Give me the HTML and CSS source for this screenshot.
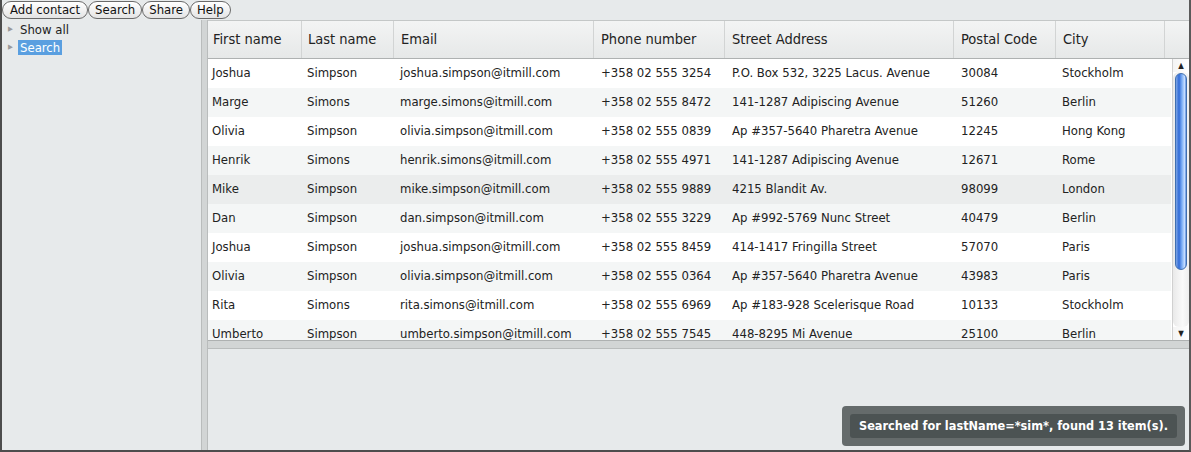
FILE: index.html
```html
<!DOCTYPE html>
<html>
<head>
<meta charset="utf-8">
<link rel="stylesheet" href="styles.css">
</head>
<body>
<div class="app">
  <div class="toolbar">
    <button class="btn">Add contact</button><button class="btn">Search</button><button class="btn">Share</button><button class="btn">Help</button>
  </div>
  <div class="main">
    <div class="tree">
      <div class="node"><span class="arrow">&#9654;</span><span class="label">Show all</span></div>
      <div class="node"><span class="arrow">&#9654;</span><span class="label sel">Search</span></div>
    </div>
    <div class="vsplit"></div>
    <div class="right">
      <div class="table">
        <div class="thead">
          <div class="th c1">First name</div>
          <div class="th c2">Last name</div>
          <div class="th c3">Email</div>
          <div class="th c4">Phone number</div>
          <div class="th c5">Street Address</div>
          <div class="th c6">Postal Code</div>
          <div class="th c7">City</div>
          <div class="th c8"></div>
        </div>
        <div class="tbody">
          <div class="rows">
            <div class="row"><div class="td c1">Joshua</div><div class="td c2">Simpson</div><div class="td c3">joshua.simpson@itmill.com</div><div class="td c4">+358 02 555 3254</div><div class="td c5">P.O. Box 532, 3225 Lacus. Avenue</div><div class="td c6">30084</div><div class="td c7">Stockholm</div></div>
            <div class="row alt"><div class="td c1">Marge</div><div class="td c2">Simons</div><div class="td c3">marge.simons@itmill.com</div><div class="td c4">+358 02 555 8472</div><div class="td c5">141-1287 Adipiscing Avenue</div><div class="td c6">51260</div><div class="td c7">Berlin</div></div>
            <div class="row"><div class="td c1">Olivia</div><div class="td c2">Simpson</div><div class="td c3">olivia.simpson@itmill.com</div><div class="td c4">+358 02 555 0839</div><div class="td c5">Ap #357-5640 Pharetra Avenue</div><div class="td c6">12245</div><div class="td c7">Hong Kong</div></div>
            <div class="row alt"><div class="td c1">Henrik</div><div class="td c2">Simons</div><div class="td c3">henrik.simons@itmill.com</div><div class="td c4">+358 02 555 4971</div><div class="td c5">141-1287 Adipiscing Avenue</div><div class="td c6">12671</div><div class="td c7">Rome</div></div>
            <div class="row hover"><div class="td c1">Mike</div><div class="td c2">Simpson</div><div class="td c3">mike.simpson@itmill.com</div><div class="td c4">+358 02 555 9889</div><div class="td c5">4215 Blandit Av.</div><div class="td c6">98099</div><div class="td c7">London</div></div>
            <div class="row alt"><div class="td c1">Dan</div><div class="td c2">Simpson</div><div class="td c3">dan.simpson@itmill.com</div><div class="td c4">+358 02 555 3229</div><div class="td c5">Ap #992-5769 Nunc Street</div><div class="td c6">40479</div><div class="td c7">Berlin</div></div>
            <div class="row"><div class="td c1">Joshua</div><div class="td c2">Simpson</div><div class="td c3">joshua.simpson@itmill.com</div><div class="td c4">+358 02 555 8459</div><div class="td c5">414-1417 Fringilla Street</div><div class="td c6">57070</div><div class="td c7">Paris</div></div>
            <div class="row alt"><div class="td c1">Olivia</div><div class="td c2">Simpson</div><div class="td c3">olivia.simpson@itmill.com</div><div class="td c4">+358 02 555 0364</div><div class="td c5">Ap #357-5640 Pharetra Avenue</div><div class="td c6">43983</div><div class="td c7">Paris</div></div>
            <div class="row"><div class="td c1">Rita</div><div class="td c2">Simons</div><div class="td c3">rita.simons@itmill.com</div><div class="td c4">+358 02 555 6969</div><div class="td c5">Ap #183-928 Scelerisque Road</div><div class="td c6">10133</div><div class="td c7">Stockholm</div></div>
            <div class="row alt"><div class="td c1">Umberto</div><div class="td c2">Simpson</div><div class="td c3">umberto.simpson@itmill.com</div><div class="td c4">+358 02 555 7545</div><div class="td c5">448-8295 Mi Avenue</div><div class="td c6">25100</div><div class="td c7">Berlin</div></div>
          </div>
          <div class="scrollbar">
            <div class="sb-btn">&#9650;</div>
            <div class="sb-track"><div class="sb-thumb"></div></div>
            <div class="sb-btn">&#9660;</div>
          </div>
        </div>
      </div>
      <div class="hsplit"></div>
      <div class="bottom">
        <div class="notice"><div class="notice-inner">Searched for lastName=*sim*, found 13 item(s).</div></div>
      </div>
    </div>
  </div>
</div>
</body>
</html>
```
FILE: styles.css
```css
html, body {
  margin: 0;
  padding: 0;
  width: 1191px;
  height: 452px;
  overflow: hidden;
  background: #e7eaeb;
  font-family: "DejaVu Sans Condensed", "DejaVu Sans", sans-serif;
}
.app {
  width: 1191px;
  height: 452px;
  box-sizing: border-box;
  border-left: 2px solid #4d4d4d;
  border-right: 2px solid #5a5a5a;
  border-bottom: 2px solid #4d4d4d;
  display: flex;
  flex-direction: column;
  background: #e7eaeb;
}
.toolbar {
  height: 20px;
  display: flex;
  align-items: flex-start;
  padding-top: 1px;
  box-sizing: border-box;
}
.btn {
  font-family: "DejaVu Sans Condensed", "DejaVu Sans", sans-serif;
  font-size: 13px;
  height: 18px;
  line-height: 14px;
  padding: 0 6px;
  margin: 0;
  border: 1px solid #6a6a6a;
  border-radius: 9px;
  background: linear-gradient(#ffffff, #f2f2f2 50%, #e4e4e4);
  color: #111;
  box-shadow: inset 0 1px 0 #fff;
}
.btn:first-child { padding: 0 7px; }
.main {
  flex: 1;
  display: flex;
  min-height: 0;
}
.tree {
  width: 199px;
  font-size: 13px;
  color: #222;
}
.node {
  display: flex;
  align-items: center;
  height: 18px;
}
.arrow {
  font-size: 7px;
  color: #999;
  width: 10px;
  margin-left: 6px;
}
.label {
  padding: 0 2px;
  line-height: 15px;
}
.sel {
  background: #5a9fe0;
  color: #fff;
}
.vsplit {
  width: 5px;
  background: #d2d5d5;
  border-left: 1px solid #b9bcbc;
  border-right: 1px solid #b9bcbc;
}
.right {
  flex: 1;
  display: flex;
  flex-direction: column;
  min-width: 0;
}
.table {
  display: flex;
  flex-direction: column;
  background: #fff;
  border-top: 1px solid #c4c7c7;
}
.thead {
  display: flex;
  height: 37px;
  background: linear-gradient(#f3f4f4, #e6e8e8);
  border-bottom: 1px solid #aeb1b1;
}
.th {
  box-sizing: border-box;
  font-size: 14.5px;
  color: #222;
  line-height: 36px;
  padding-left: 7px;
  border-right: 1px solid #d2d4d4;
  white-space: nowrap;
}
.th.c1 { padding-left: 5px; }
.th.c2 { padding-left: 6px; }
.c1 { width: 94px; }
.c2 { width: 92px; }
.c3 { width: 200px; }
.c4 { width: 131px; }
.c5 { width: 229px; }
.c6 { width: 102px; }
.c7 { width: 109px; }
.c8 { flex: 1; border-right: none; }
.tbody {
  display: flex;
  height: 281px;
  overflow: hidden;
}
.rows {
  width: 963px;
  overflow: hidden;
}
.row {
  display: flex;
  height: 29px;
  background: #fff;
}
.row.alt { background: #f4f6f6; }
.row.hover { background: #ebeded; }
.td {
  box-sizing: border-box;
  font-size: 13px;
  color: #222;
  line-height: 28px;
  padding-left: 7px;
  white-space: nowrap;
  overflow: hidden;
}
.td.c1 { padding-left: 4px; }
.td.c2 { padding-left: 5px; }
.td.c3 { padding-left: 6px; }
.td.c7 { padding-left: 6px; }
.scrollbar {
  width: 16px;
  margin-left: 1px;
  display: flex;
  flex-direction: column;
  background: #fff;
  border-left: 1px solid #d0d0d0;
}
.sb-btn {
  height: 13px;
  font-size: 8px;
  line-height: 13px;
  text-align: center;
  color: #222;
  background: linear-gradient(90deg, #f4f4f4, #ffffff);
}
.sb-track {
  flex: 1;
  padding: 1px 2px;
  background: linear-gradient(90deg, #e9e9e9, #fafafa 60%, #eeeeee);
  border-radius: 6px;
}
.sb-thumb {
  height: 195px;
  border-radius: 6px;
  border: 1px solid #3f6fb0;
  background: linear-gradient(90deg, #7fa6e6, #2f6ad8 30%, #7fb0f5 60%, #c3dcff 85%, #5d8fe0);
}
.hsplit {
  height: 7px;
  background: #d2d5d5;
  border-top: 1px solid #aeb1b1;
  border-bottom: 1px solid #b9bcbc;
}
.bottom {
  flex: 1;
  display: flex;
  justify-content: flex-end;
  align-items: flex-end;
  padding: 0 4px 4px 0;
}
.notice {
  background: #656b6b;
  border-radius: 4px;
  padding: 8px 8px;
}
.notice-inner {
  background: #4c5353;
  border-radius: 3px;
  color: #fff;
  font-weight: bold;
  font-size: 12.6px;
  line-height: 24px;
  padding: 0 9px;
  white-space: nowrap;
}
```
